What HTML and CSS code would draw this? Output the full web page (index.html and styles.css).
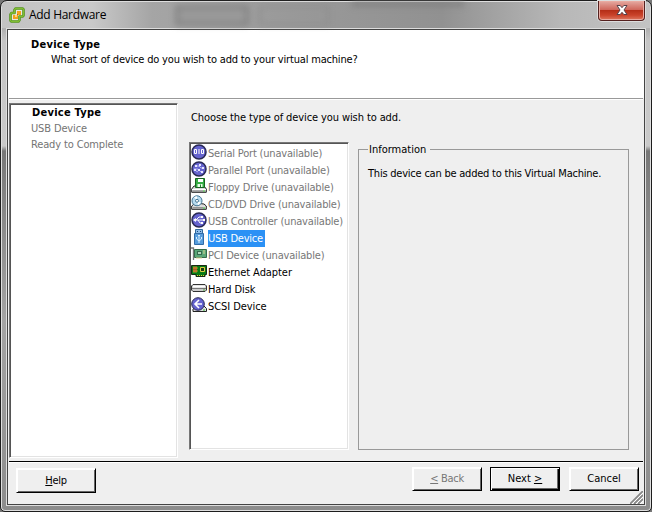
FILE: index.html
```html
<!DOCTYPE html>
<html lang="en">
<head>
<meta charset="utf-8">
<title>Add Hardware</title>
<link rel="stylesheet" href="styles.css">
</head>
<body>
<div class="window">
  <div class="titlebar">
    <svg class="app-icon" width="16" height="16" viewBox="0 0 16 16"><path d="M6.500 1.500h7l1 1v6l-1 1h-3v3.500l-1 1.500h-7l-1-1v-6l1-1.500h3v-3z" fill="#e8e8e0" stroke="#4f8c20" stroke-width="2.600" stroke-linejoin="round"/><path d="M6.500 1.500h7l1 1v6l-1 1h-3v3.500l-1 1.500h-7l-1-1v-6l1-1.500h3v-3z" fill="none" stroke="#80bd32" stroke-width="1.400"/><path d="M8 4h4v4H9v4H4V8h4z" fill="#f4a21c"/><path d="M6 8h2v2H6z" fill="#ffd778"/><path d="M8 7h1v1H8z" fill="#b96c09"/></svg>
    <span class="title">Add Hardware</span>
    <span class="shade shade-a"></span><span class="shade shade-b"></span><span class="shade shade-c"></span>
    <button class="close" aria-label="Close"><svg width="12" height="10" viewBox="0 0 12 10"><path d="M1 .5h3.200L6 2.700 7.800.5H11L8 5l3 4.500H7.800L6 7.300 4.200 9.500H1L4 5z" fill="#fff" stroke="#55424a"/></svg></button>
  </div>
  <main class="client">
    <header>
      <h1>Device Type</h1>
      <p>What sort of device do you wish to add to your virtual machine?</p>
    </header>
    <div class="body">
      <nav class="steps"><b>Device Type</b><span>USB Device</span><span>Ready to Complete</span></nav>
      <section class="choice">
        <p class="prompt">Choose the type of device you wish to add.</p>
        <div class="columns">
          <ul class="devices">
            <li class="off"><svg viewBox="0 0 16 16"><circle cx="8" cy="8" r="7" fill="#6563ce" stroke="#292954" stroke-width="1.500"/><path d="M3.500 5.500h2v4h-2zM8 5v5M10.500 5.500h2v4h-2z" fill="none" stroke="#fff"/></svg><span>Serial Port (unavailable)</span></li>
            <li class="off"><svg viewBox="0 0 16 16"><circle cx="8" cy="8" r="7" fill="#6563ce" stroke="#292954" stroke-width="1.500"/><path d="M4 5h4l2 2h3M3 8h4l3 3M7 11l-2-1" fill="none" stroke="#b5b5f5"/><path d="M4 4h2v2H4zM8 3h2v2H8zM11 6h2v2h-2zM3 8h2v2H3zM7 8h2v2H7zM10 10h2v2h-2z" fill="#e8e8ff"/></svg><span>Parallel Port (unavailable)</span></li>
            <li class="off"><svg viewBox="0 0 16 16"><path d="M3 8L.7 11v3.300h14.600V11L13 8z" fill="#ddd" stroke="#222"/><path d="M1 11.500h14" stroke="#fff"/><path d="M2 13h10" stroke="#777"/><path d="M4.500.5h9v9h-9z" fill="#37ad45" stroke="#17641f"/><path d="M7 1h5v3H7z" fill="#fff"/><path d="M6.500 6h5v3h-5z" fill="#e7ffe7"/><path d="M9 6.500h1V9H9z" fill="#267c2d"/><path d="M12 13h2" stroke="#3b3"/></svg><span>Floppy Drive (unavailable)</span></li>
            <li class="off"><svg viewBox="0 0 16 16"><path d="M4 8L.7 11v3.300h14.600V11L13 9z" fill="#ddd" stroke="#222"/><path d="M2 12.800h10" stroke="#777"/><circle cx="6" cy="5.800" r="5" fill="#b9dcf0" stroke="#477795"/><path d="M6 5.800L3 2l3-.7zM6 5.800l4 2-3 2.500z" fill="#fff"/><circle cx="6" cy="5.800" r="1.500" fill="#fff" stroke="#477795"/><path d="M12 13h2" stroke="#3b3"/></svg><span>CD/DVD Drive (unavailable)</span></li>
            <li class="off"><svg viewBox="0 0 16 16"><circle cx="8" cy="8" r="7" fill="#6563ce" stroke="#292954" stroke-width="1.500"/><path d="M3 8h9M5 8l3-3h2M7 8l2 3h2" fill="none" stroke="#fff"/><path d="M2 8l3-2v4zM10 4h2v2h-2zM10 10h2v2h-2zM12 7h2v2h-2z" fill="#fff"/></svg><span>USB Controller (unavailable)</span></li>
            <li class="selected"><svg viewBox="0 0 16 16"><path d="M4.500.5h7v4h-7z" fill="#8dbce8" stroke="#326b9d"/><path d="M6 2h1v1H6zM9 2h1v1H9z" fill="#194b80"/><path d="M3.500 4.500h9v11h-9z" fill="#579ddd" stroke="#316ca8"/><path d="M8 14V6M5.500 8v2L8 12l2.500-2V8M7 7l1-1 1 1" fill="none" stroke="#d9f0ff"/></svg><span>USB Device</span></li>
            <li class="off"><svg viewBox="0 0 16 16"><path d="M0 2h2.500v12" fill="none" stroke="#777" stroke-width="1.300"/><path d="M3.500 3.500h12v8h-12z" fill="#5ba677" stroke="#346b48"/><path d="M6 5h5v4H6z" fill="#376a4d"/><path d="M7 6h3v2H7z" fill="#b1d9bc"/><path d="M12 5h2M12 7h2M5 12h6" stroke="#ddd694"/></svg><span>PCI Device (unavailable)</span></li>
            <li><svg viewBox="0 0 16 16"><path d="M.5 2.500h15v9H14v2H5v-2H.5z" fill="#087b14" stroke="#172a13"/><path d="M2 4h4v5H2z" fill="#8e2a22"/><path d="M2 5h5M2 8h5M3 3v7M5 3v7" stroke="#e0b438" stroke-width=".7"/><path d="M9.500 4.500h4v4h-4z" fill="#173b16" stroke="#ddcc43"/><path d="M6 12.500h7" stroke="#e5c63c" stroke-dasharray="1 1"/></svg><span class="plain">Ethernet Adapter</span></li>
            <li><svg viewBox="0 0 16 16"><path d="M2 4.500h12l1.500 1.500v4l-1.500 1.500H2L.5 10V6z" fill="#ccc" stroke="#333"/><path d="M2 6.500h12" stroke="#fff" stroke-width="2"/><path d="M1 8.500h14" stroke="#777"/><path d="M12 10h2" stroke="#4aae40"/></svg><span class="plain">Hard Disk</span></li>
            <li><svg viewBox="0 0 16 16"><path d="M5 10l-3 2v2.500h13.500v-3L13 9z" fill="#ddd" stroke="#222"/><circle cx="7" cy="7" r="6.300" fill="#6563ce" stroke="#292954"/><path d="M8 3L4 7l4 4M5 7h6" fill="none" stroke="#fff" stroke-width="1.600"/><path d="M12 13h2" stroke="#3b3"/></svg><span class="plain">SCSI Device</span></li>
          </ul>
          <fieldset><legend>Information</legend><p>This device can be added to this Virtual Machine.</p></fieldset>
        </div>
      </section>
    </div>
    <footer>
      <button class="btn help"><u>H</u>elp</button>
      <button class="btn back" disabled><u>&lt;</u> Back</button>
      <button class="btn next">Next <u>&gt;</u></button>
      <button class="btn cancel">Cancel</button>
      <svg class="grip" width="13" height="13" viewBox="0 0 13 13"><path d="M0 13L13 0M4 13l9-9M8 13l5-5" stroke="#888" stroke-width="1.800"/><path d="M2 13L13 2M6 13l7-7M10 13l3-3" stroke="#fff"/></svg>
    </footer>
  </main>
</div>
</body>
</html>
```
FILE: styles.css
```css
* { box-sizing: border-box; }
body {
  margin: 0; width: 652px; height: 512px; overflow: hidden; background: #777;
  font-family: "DejaVu Sans Condensed", "DejaVu Sans", sans-serif;
  font-stretch: condensed; font-size: 11px; line-height: 16px; color: #000;
}
h1, p, ul { margin: 0; padding: 0; }
.window {
  width: 652px; height: 512px; padding: 0 5px 5px; border: 1px solid #1d1d1d;
  border-radius: 7px 7px 5px 5px;
  background: linear-gradient(#b5b5b5 0, #b0b0b0 28px, #c5c5c5 40px, #c9c9c9 145px, #777 150px, #a4a4a4 320px, #8c8c8c 100%);
  box-shadow: inset 0 0 0 1px #dedede;
}
.titlebar {
  position: relative; height: 26px; margin: 1px -4px 0; padding: 0 5px 0 7px;
  display: flex; align-items: flex-start; border-radius: 5px 5px 0 0;
  background: linear-gradient(90deg, #c3c3c3, #c9c9c9 90px, #a5a5a5 150px, #999 300px, #919191 440px, #b8b8b8 560px, #c3c3c3);
}
.app-icon { margin-top: 5px; }
.title { margin: 5px 0 0 4px; font: 12px/16px "Open Sans", sans-serif; letter-spacing: -.3px; white-space: nowrap; }
.shade { position: absolute; filter: blur(3px); }
.shade-a { left: 174px; top: 4px; width: 72px; height: 19px; border: 2px solid #707070; background: #999; }
.shade-b { left: 257px; top: 4px; width: 70px; height: 19px; border: 2px solid #8b8b8b; }
.shade-c { left: 350px; top: 0; width: 112px; height: 4px; background: #7d7d7d; }
.close {
  margin: -1px 0 0 auto; width: 47px; height: 20px; padding: 0 0 1px; display: flex;
  align-items: center; justify-content: center; border: 1px solid #54201e; border-top: 0;
  border-radius: 0 0 4px 4px; box-shadow: 0 0 0 1px #ddd, inset 0 0 0 1px #e9aaa0;
  background: linear-gradient(#e5aaa2, #cf6559 47%, #b52f18 50%, #ca432a 75%, #dd7860);
}
.client {
  height: 478px; border: 1px solid #ddd; background: #efefef;
  display: flex; flex-direction: column; box-shadow: inset 0 0 0 1px #444; padding: 1px;
}
header { height: 68px; background: #fff; padding: 7px 0 0 23px; }
header h1, .steps b { font-size: 11px; line-height: 16px; font-weight: bold; letter-spacing: .25px; }
header p { padding-left: 20px; line-height: 14px; letter-spacing: -.18px; white-space: nowrap; }
.body { height: 363px; margin: 0 1px; border-top: 1px solid #999; box-shadow: inset 0 1px #fff; display: flex; padding-top: 4px; }
.steps {
  width: 169px; height: 355px; display: flex; flex-direction: column; padding: 1px 0 0 21px; background: #fff;
  border: 1px solid; border-color: #777 #fff #fff #777; box-shadow: inset 1px 1px #555, inset -1px -1px #e3e3e3; color: #747474;
  letter-spacing: -.14px;
}
.steps b { color: #000; margin-left: 1px; }
.choice { padding-left: 11px; }
.prompt { height: 39px; padding: 7px 0 0 2px; letter-spacing: -.1px; }
.columns { display: flex; gap: 9px; }
.devices {
  width: 160px; height: 308px; padding: 2px 0 0 2px; background: #fff; list-style: none; letter-spacing: -.19px;
  border: 1px solid; border-color: #777 #fff #fff #777; box-shadow: inset 1px 1px #555, inset -1px -1px #e3e3e3;
}
.devices li { height: 17px; display: flex; align-items: center; white-space: nowrap; }
.devices svg { width: 16px; height: 16px; flex: none; align-self: flex-start; margin: -1px 1px 0 -1px; }
.plain { letter-spacing: -.07px; }
.off { color: #777; }
.selected span { height: 17px; width: 57px; line-height: 18px; background: #2b91f5; color: #fff; letter-spacing: -.25px; }
fieldset {
  width: 271px; height: 308px; margin: 0; padding: 10px 0 0 9px; min-width: 0;
  border: 1px solid #999; letter-spacing: -.22px;
}
legend { padding: 0 4px 0 1px; height: 14px; line-height: 15px; letter-spacing: 0; }
footer { position: relative; height: 43px; margin: 0 1px; border-top: 1px solid #000; box-shadow: inset 0 1px #fff; display: flex; padding: 5px 4px 0 7px; }
.btn {
  width: 70px; height: 24px; padding: 0; background: #efefef; font: inherit; color: #000;
  border: 1px solid; border-color: #fff #000 #000 #fff;
  box-shadow: inset 1px 1px #fff, inset -1px -1px #666;
}
.help { width: 80px; height: 25px; margin: 1px 316px 0 0; letter-spacing: -.3px; }
.back { color: #777; margin-right: 8px; letter-spacing: -.3px; }
.next { border-color: #000; box-shadow: inset 1px 1px #fff, inset -1px -1px #000, inset -2px -2px #666; margin-right: 9px; }
.grip { position: absolute; right: 0; bottom: 0; }
```
